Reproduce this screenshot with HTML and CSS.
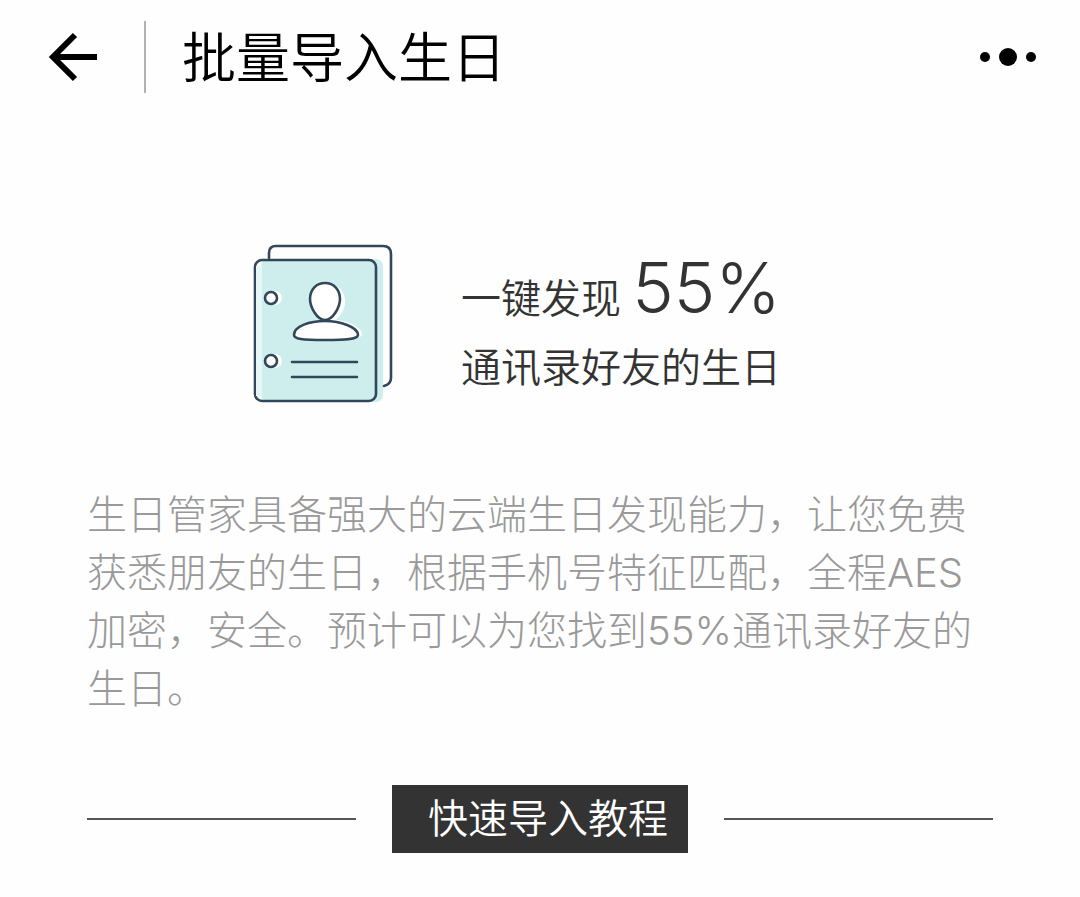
FILE: index.html
```html
<!DOCTYPE html>
<html lang="zh-CN">
<head>
<meta charset="utf-8">
<meta name="viewport" content="width=device-width, initial-scale=1">
<title>批量导入生日</title>
<link rel="stylesheet" href="styles.css">
</head>
<body>
<header class="topbar">
  <button class="icon-button" type="button" aria-label="返回">
    <svg width="50" height="50" viewBox="0 0 50 50" fill="none" stroke="#000" stroke-width="6"><path d="M49 25H6M27 3L5 25l22 22"/></svg>
  </button>
  <h1 class="title">批量导入生日</h1>
  <button class="icon-button more" type="button" aria-label="更多">
    <svg width="58" height="20" viewBox="0 0 58 20"><circle cx="6" cy="10" r="5"/><circle cx="29" cy="10" r="9"/><circle cx="52" cy="10" r="5"/></svg>
  </button>
</header>
<main class="content">
  <section class="hero">
    <svg class="book" width="140" height="160" viewBox="0 0 140 160" fill="none" stroke="#32475a" stroke-width="2.6" stroke-linecap="round" stroke-linejoin="round" aria-hidden="true">
      <rect x="8" y="15" width="122" height="143" rx="7" fill="#cdeeed" stroke="none"/>
      <path d="M16 14V9q0-7 7-7h107q8 0 8 8v124q0 6-7 8"/>
      <rect x="2" y="16" width="121" height="141" rx="7"/>
      <path d="M3 22h6v130H3z" fill="#e6f7f7" stroke="none"/>
      <g fill="#fff" stroke="none"><circle cx="22" cy="54" r="7"/><circle cx="22" cy="117" r="7"/><path d="M76 40c-8 0-16 7-15 17 1 8 6 15 10 20-12 1-26 6-26 13 0 4 11 5 33 5 21 0 32-1 31-5-1-8-15-13-26-14 7-6 9-13 9-19 0-10-7-17-16-17z"/></g>
      <circle cx="18" cy="54" r="6" fill="#fff"/><circle cx="18" cy="117" r="6" fill="#fff"/>
      <path d="M72 39c-9 0-15 7-15 16 0 8 7 21 15 21s15-13 15-21c0-9-6-16-15-16z" fill="#fff"/>
      <path d="M41 91c0-9 16-14 31-14s33 6 33 14c0 4-10 5-33 5s-31-1-31-5z" fill="#fff"/>
      <path d="M39 118h65M39 133h65"/>
    </svg>
    <p class="headline"><span class="line">一键发现 <strong class="rate">55%</strong></span><span class="line second">通讯录好友的生日</span></p>
  </section>
  <p class="intro">生日管家具备强大的云端生日发现能力，让您免费获悉朋友的生日，根据手机号特征匹配，全程AES加密，安全。预计可以为您找到55%通讯录好友的生日。</p>
  <h2 class="divider"><span class="label">快速导入教程</span></h2>
</main>
</body>
</html>
```
FILE: styles.css
```css
* { box-sizing: border-box; }
body {
  margin: 0;
  background: #fefefe;
  color: #333;
  font-family: Inter, "Noto Sans CJK SC", sans-serif;
}
.topbar {
  display: flex;
  align-items: center;
  padding: 21px 43px 21px 48px;
}
.icon-button {
  display: flex;
  padding: 0;
  border: 0;
  background: none;
}
.more { margin-left: auto; }
.title {
  margin: 0 0 0 46px;
  padding: 4px 0 0 36px;
  border-left: 2px solid #b2b2b2;
  color: #000;
  font-size: 54px;
  font-weight: 350;
  line-height: 68px;
}
.content { padding: 130px 87px 40px; }
.hero {
  display: flex;
  justify-content: center;
  gap: 68px;
  padding-right: 46px;
}
.book { flex: none; }
.headline {
  margin: 0;
  padding-top: 4px;
  font-size: 40px;
  font-weight: 350;
  white-space: nowrap;
}
.line { display: block; line-height: 80px; }
.second { line-height: 58px; }
.rate { font-size: 70px; font-weight: 300; line-height: 80px; }
.intro {
  margin: 82px 0 0;
  color: #999;
  font-size: 40px;
  font-weight: 300;
  line-height: 58px;
}
.divider {
  display: flex;
  align-items: center;
  gap: 36px;
  margin: 67px 0 0;
  font-size: 40px;
  font-weight: 350;
}
.divider::before, .divider::after {
  content: "";
  flex: 1;
  height: 2px;
  background: #555;
}
.label {
  padding: 0 20px 0 36px;
  background: #333;
  color: #fff;
  line-height: 68px;
}
```
